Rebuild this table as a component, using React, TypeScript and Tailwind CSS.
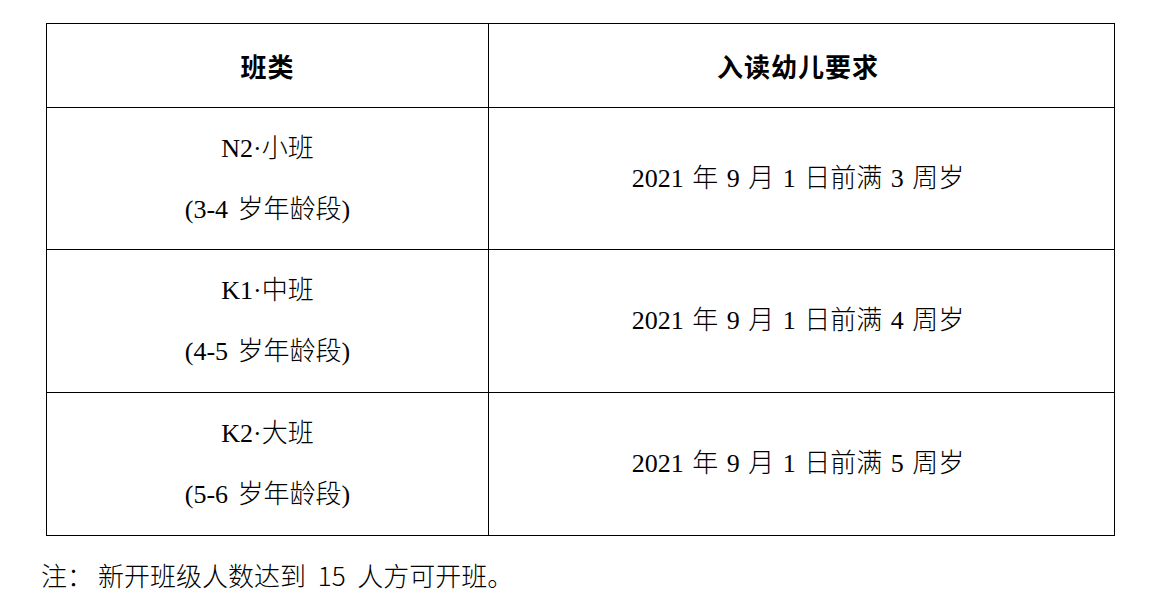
import React from "react";

const rows = [
  { a: "N2·小班", b: "(3-4 岁年龄段)", c: "2021 年 9 月 1 日前满 3 周岁" },
  { a: "K1·中班", b: "(4-5 岁年龄段)", c: "2021 年 9 月 1 日前满 4 周岁" },
  { a: "K2·大班", b: "(5-6 岁年龄段)", c: "2021 年 9 月 1 日前满 5 周岁" },
];

const serif = "font-['Liberation_Serif','Noto_Sans_CJK_SC',serif]";

export default function App() {
  return (
    <div className="w-[1155px] h-[605px] bg-white text-black overflow-hidden">
      <div className="ml-[46px] pt-[23px]">
        <div className="w-[1069px] border-l border-t border-black grid grid-cols-[442px_626px] grid-rows-[84px_142px_143px_143px]">
          <div className="border-r border-b border-black flex items-center justify-center font-['Noto_Sans_CJK_SC',sans-serif] font-bold text-[26px] tracking-[1px]">
            班类
          </div>
          <div className="border-r border-b border-black flex items-center justify-center pr-[7px] font-['Noto_Sans_CJK_SC',sans-serif] font-bold text-[26px] tracking-[1px]">
            入读幼儿要求
          </div>
          {rows.map((r) => (
            <React.Fragment key={r.a}>
              <div className={`border-r border-b border-black flex flex-col items-center justify-center ${serif} font-light text-[26px] leading-[61px] [word-spacing:3px]`}>
                <div>{r.a}</div>
                <div>{r.b}</div>
              </div>
              <div className={`border-r border-b border-black flex items-center justify-center pr-[7px] ${serif} font-light text-[26px] leading-[40px] [word-spacing:2px]`}>
                {r.c}
              </div>
            </React.Fragment>
          ))}
        </div>
      </div>
      <div className="ml-[41px] mt-[21px] font-['Noto_Sans_CJK_SC',sans-serif] font-light text-[26px] leading-[36px] [word-spacing:6px]">
        <span className="mr-[5px]">注：</span>新开班级人数达到 15 人方可开班。
      </div>
    </div>
  );
}
